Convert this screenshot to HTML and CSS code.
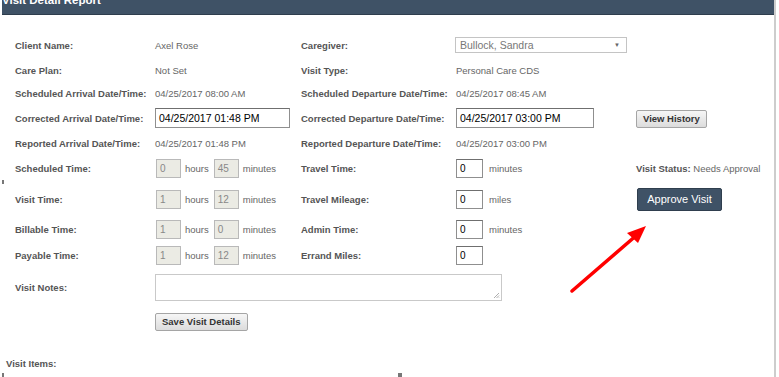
FILE: index.html
```html
<!DOCTYPE html>
<html>
<head>
<meta charset="utf-8">
<link rel="stylesheet" href="styles.css">
</head>
<body>
<div class="page">
  <div class="header">Visit Detail Report</div>
  <div class="form">
    <div class="row first">
      <span class="lbl">Client Name:</span>
      <span class="val">Axel Rose</span>
      <span class="lbl">Caregiver:</span>
      <div class="select"><span>Bullock, Sandra</span><span class="caret">▼</span></div>
    </div>
    <div class="row">
      <span class="lbl">Care Plan:</span>
      <span class="val">Not Set</span>
      <span class="lbl">Visit Type:</span>
      <span class="val">Personal Care CDS</span>
    </div>
    <div class="row g3">
      <span class="lbl">Scheduled Arrival Date/Time:</span>
      <span class="val">04/25/2017 08:00 AM</span>
      <span class="lbl">Scheduled Departure Date/Time:</span>
      <span class="val">04/25/2017 08:45 AM</span>
    </div>
    <div class="row">
      <span class="lbl">Corrected Arrival Date/Time:</span>
      <div class="dt">04/25/2017 01:48 PM</div>
      <span class="lbl">Corrected Departure Date/Time:</span>
      <div class="dt dt2">04/25/2017 03:00 PM</div>
      <div><button class="btn">View History</button></div>
    </div>
    <div class="row">
      <span class="lbl">Reported Arrival Date/Time:</span>
      <span class="val">04/25/2017 01:48 PM</span>
      <span class="lbl">Reported Departure Date/Time:</span>
      <span class="val">04/25/2017 03:00 PM</span>
    </div>
    <div class="row g6">
      <span class="lbl">Scheduled Time:</span>
      <div class="time"><span class="box dis">0</span><span class="unit">hours</span><span class="box dis">45</span><span class="unit">minutes</span></div>
      <span class="lbl">Travel Time:</span>
      <div class="time"><span class="box">0</span><span class="unit u2">minutes</span></div>
      <div class="status"><b>Visit Status:</b> Needs Approval</div>
    </div>
    <div class="row g10">
      <span class="lbl">Visit Time:</span>
      <div class="time"><span class="box dis">1</span><span class="unit">hours</span><span class="box dis">12</span><span class="unit">minutes</span></div>
      <span class="lbl">Travel Mileage:</span>
      <div class="time"><span class="box">0</span><span class="unit u2">miles</span></div>
      <div><button class="approve">Approve Visit</button></div>
    </div>
    <div class="row g11">
      <span class="lbl">Billable Time:</span>
      <div class="time"><span class="box dis">1</span><span class="unit">hours</span><span class="box dis">0</span><span class="unit">minutes</span></div>
      <span class="lbl">Admin Time:</span>
      <div class="time"><span class="box">0</span><span class="unit u2">minutes</span></div>
    </div>
    <div class="row g6">
      <span class="lbl">Payable Time:</span>
      <div class="time"><span class="box dis">1</span><span class="unit">hours</span><span class="box dis">12</span><span class="unit">minutes</span></div>
      <span class="lbl">Errand Miles:</span>
      <div class="time"><span class="box">0</span></div>
    </div>
    <div class="row notes">
      <span class="lbl">Visit Notes:</span>
      <div class="ta"><svg class="grip" width="7" height="7" viewBox="0 0 7 7"><path d="M6 1L1 6M6 3.5L3.5 6M6 5.5L5.5 6" stroke="#999" stroke-width="0.8"/></svg></div>
    </div>
    <div class="row save">
      <span></span>
      <div><button class="btn">Save Visit Details</button></div>
    </div>
    <div class="items">Visit Items:</div>
  </div>
  <svg class="arrow" width="100" height="90" viewBox="0 0 100 90">
    <line x1="12" y1="81" x2="78" y2="24" stroke="#ff0000" stroke-width="3.5" stroke-linecap="round"/>
    <polygon points="86,16 67,23 78,33" fill="#ff0000"/>
  </svg>
  <span class="dot d1"></span>
  <span class="dot d2"></span>
  <span class="dot d3"></span>
</div>
</body>
</html>
```
FILE: styles.css
```css
body {
  margin: 0;
  background: #fff;
  font-family: "Liberation Sans", Arial, sans-serif;
}
.page {
  position: relative;
  margin-left: 2px;
  width: 772px;
  height: 377px;
  border-right: 2px solid #cdcdcd;
  overflow: hidden;
}
.header {
  margin-top: -9px;
  padding: 2px 0 7px 0;
  line-height: 14px;
  font-size: 11.5px;
  font-weight: bold;
  color: #fff;
  background: #3f5266;
  border-bottom: 1px solid #2e3d4d;
}
.form {
  display: flex;
  flex-direction: column;
  padding: 20px 0 0 13px;
}
.row {
  display: grid;
  grid-template-columns: 140px 146px 155px 180px 1fr;
  align-items: center;
  height: 20px;
  margin-top: 5px;
}
.row.first { margin-top: 0; }
.row.g3 { margin-top: 3px; }
.row.g6 { margin-top: 5.5px; }
.row.g10 { margin-top: 9px; }
.row.g11 { margin-top: 12px; }
.lbl {
  font-size: 9.5px;
  font-weight: bold;
  color: #555;
  white-space: nowrap;
}
.val {
  font-size: 9.5px;
  color: #666;
  white-space: nowrap;
}
.select {
  display: flex;
  justify-content: space-between;
  align-items: center;
  margin-left: -1px;
  padding: 0 6px 0 4px;
  box-sizing: border-box;
  width: 172px;
  height: 16px;
  border: 1px solid #c4c4c4;
  font-size: 10.5px;
  color: #777;
}
.caret {
  font-size: 6px;
  color: #666;
}
.dt {
  width: 135px;
  height: 20px;
  box-sizing: border-box;
  border: 1px solid #8f8f8f;
  border-top-color: #6f6f6f;
  padding: 0 3px;
  font-size: 10.5px;
  line-height: 18px;
  color: #000;
}
.dt2 { width: 138px; }
.btn {
  font-family: "Liberation Sans", Arial, sans-serif;
  font-size: 9.5px;
  font-weight: bold;
  color: #333;
  height: 18px;
  padding: 0 6px;
  border: 1px solid #a5a5a5;
  border-radius: 2px;
  background: linear-gradient(#f6f6f6, #dcdcdc);
}
.time {
  display: flex;
  align-items: center;
}
.box {
  display: block;
  width: 27px;
  height: 19px;
  box-sizing: border-box;
  border: 1px solid #8f8f8f;
  border-top-color: #6f6f6f;
  background: #fff;
  padding-left: 3px;
  font-size: 10px;
  line-height: 17px;
  color: #000;
}
.box.dis {
  width: 25px;
  margin-left: 1px;
  background: #ebebe4;
  border-color: #b9b9b9;
  color: #888;
}
.unit {
  font-size: 9.5px;
  color: #666;
  padding: 0 4px 0 4px;
}
.unit.u2 { padding-left: 6px; }
.status {
  font-size: 9.5px;
  color: #666;
  white-space: nowrap;
}
.status b { color: #555; }
.approve {
  font-family: "Liberation Sans", Arial, sans-serif;
  font-size: 11px;
  color: #fff;
  width: 85px;
  height: 23px;
  margin-left: 1px;
  border: 1px solid #2f3e4e;
  border-radius: 2px;
  background: #3f5266;
}
.row.notes {
  height: 27px;
  margin-top: 9px;
}
.ta {
  position: relative;
  grid-column: 2 / 5;
  width: 347px;
  height: 27px;
  box-sizing: border-box;
  border: 1px solid #c9c9c9;
}
.grip {
  position: absolute;
  right: 1px;
  bottom: 1px;
}
.row.save {
  height: 18px;
  margin-top: 10px;
}
.items {
  margin: 29px 0 0 -9px;
  font-size: 9.5px;
  font-weight: bold;
  color: #555;
}
.arrow {
  position: absolute;
  left: 558px;
  top: 210px;
}
.dot {
  position: absolute;
  width: 4px;
  height: 4px;
  background: #777;
}
.d1 { left: -2px; top: 180px; }
.d2 { left: -2px; top: 373px; }
.d3 { left: 396px; top: 373px; }
```
